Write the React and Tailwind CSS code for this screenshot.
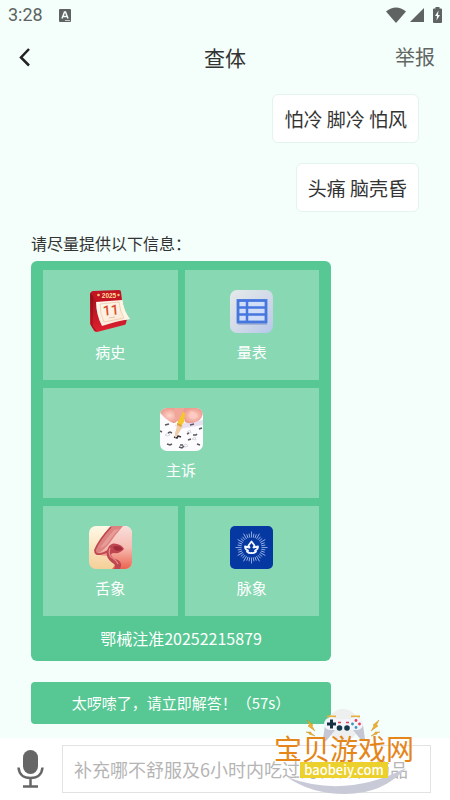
import React, { useState } from 'react';

const messages = ['怕冷 脚冷 怕风', '头痛 脑壳昏'];

function CalendarIcon() {
  return (
    <svg viewBox="0 0 43 43" className="size-[43px]" aria-hidden="true">
      <defs>
        <linearGradient id="cal-red" x1="0" y1="0" x2="0" y2="1">
          <stop offset="0" stopColor="#9c0f1b" />
          <stop offset="1" stopColor="#e0202f" />
        </linearGradient>
        <linearGradient id="cal-page" x1="0" y1="0" x2="1" y2="1">
          <stop offset="0" stopColor="#fffaf0" />
          <stop offset="1" stopColor="#f8e6d2" />
        </linearGradient>
      </defs>
      <path d="M1 4q0-2 2-2l4 7 31 20-1 4q0 2-2 2L8 42q-3 0-4-3L1 34z" fill="url(#cal-red)" />
      <path d="M3 5v31l4 5" fill="none" stroke="#7c0c15" strokeWidth=".8" />
      <path d="M7 11 33 9q2 13 8 20-13 2-28 7Q7 25 7 11z" fill="url(#cal-page)" />
      <path d="M33 9q2 13 8 20l-7 1q-1-9-4-15z" fill="#fff5e5" />
      <path d="M11 14 30 12q1 10 5 16L15 32q-4-8-4-18z" fill="none" stroke="#ecc3a2" strokeWidth=".7" />
      <path d="M2 3Q2 1 4 1l26-1q2 0 2 2l1 8L7 12z" fill="#c31423" />
      <text x="20" y="8" textAnchor="middle" fontFamily="Liberation Sans, sans-serif" fontSize="6.500" fontWeight="700" fill="#ffdf9b">2025</text>
      <circle cx="9.500" cy="5" r="1.300" fill="#f6c878" />
      <circle cx="29.500" cy="5" r="1.200" fill="#f6c878" />
      <text x="22" y="25" textAnchor="middle" fontFamily="Roboto, sans-serif" fontSize="14" fontWeight="500" fill="#d9502d" transform="rotate(-5 22 22)">11</text>
      <path d="m20 28 6-1" stroke="#deb294" strokeWidth=".7" />
    </svg>
  );
}

function TableIcon() {
  return (
    <svg viewBox="0 0 43 43" className="size-[43px]" aria-hidden="true">
      <defs>
        <linearGradient id="table-bg" x1="0" y1="0" x2="1" y2="1">
          <stop offset="0" stopColor="#e5e9e9" />
          <stop offset=".5" stopColor="#d3dbe8" />
          <stop offset="1" stopColor="#b6c7eb" />
        </linearGradient>
      </defs>
      <rect width="43" height="43" rx="7" fill="url(#table-bg)" />
      <path d="M7 32h30v3H8z" fill="#8f9fc4" opacity=".6" />
      <rect x="8" y="10.500" width="28" height="21.500" fill="#d0def8" stroke="#4577df" strokeWidth="2.800" />
      <path d="M8 17.500h28M8 24.500h28M17 10v22" stroke="#4577df" strokeWidth="2.500" />
    </svg>
  );
}

function ComplaintIcon() {
  return (
    <svg viewBox="0 0 43 43" className="size-[43px]" aria-hidden="true">
      <defs>
        <clipPath id="complaint-clip"><rect width="43" height="43" rx="7" /></clipPath>
        <radialGradient id="skin">
          <stop offset="0" stopColor="#ffd5cb" />
          <stop offset="1" stopColor="#ec9c8f" />
        </radialGradient>
      </defs>
      <g clipPath="url(#complaint-clip)">
        <path d="M0 0h43v43H0z" fill="#fcfbfe" />
        <path d="M14 17 43 12v5l-24 4z" fill="#eadff0" />
        <g fill="none" stroke="#d8d7de" strokeWidth="1">
          <path d="m5 27 3-2 2 2-3 1zm17 11 4-2 2 2-3 1zm10-7 3-2 1 3zm-5-7 3-2 1 3z" />
        </g>
        <g fill="none" stroke="#5b5860" strokeWidth="1.500">
          <path d="m5 17 4-1m21 1 4-1m5 5 3-1M0 23l2 1m6 1 2-1 2 1m-5 11 3 1 2-1m15-10 2-1m-1 7 3-1M19 39l3 1 2-2m-4-1 3 0m14-1 3 1M33 27l3 0 1-1" />
        </g>
        <path d="m14 29 3 1 1-2 3 1" fill="none" stroke="#39343b" strokeWidth="1.600" />
        <path d="M0 0h15l4 8q-2 8-6 7Q4 11 0 4z" fill="url(#skin)" />
        <path d="M14 0h11l-1 9q-2 5-6 5-4-4-4-14z" fill="#f0a79a" />
        <path d="M24 0h19q1 9-5 13-8 4-13 1-3-8-1-14z" fill="url(#skin)" />
        <path d="M31 3q6 1 7 6-4 3-8 1-2-4 1-7z" fill="#ffc9c3" opacity=".8" />
        <path d="m18 15 5 3-6 10-2 2 0-5z" fill="#f0cda6" />
        <path d="m20 10 3-6 2 1-1 9-3 4-4-2z" fill="#f6c62a" />
        <path d="m17 15 5 2-1 2-4-2z" fill="#dba33a" />
      </g>
    </svg>
  );
}

function TongueIcon() {
  return (
    <svg viewBox="0 0 43 43" className="size-[43px]" aria-hidden="true">
      <defs>
        <linearGradient id="tongue-bg" x1="0" y1="0" x2="0" y2="1">
          <stop offset="0" stopColor="#fff8e6" />
          <stop offset="1" stopColor="#f5cf98" />
        </linearGradient>
        <linearGradient id="tongue-skin" x1="0" y1="0" x2="0" y2="1">
          <stop offset="0" stopColor="#f9dedb" />
          <stop offset=".5" stopColor="#f6bdb2" />
          <stop offset="1" stopColor="#ec6350" />
        </linearGradient>
        <clipPath id="tongue-clip"><rect width="43" height="43" rx="7" /></clipPath>
      </defs>
      <g clipPath="url(#tongue-clip)">
        <path d="M0 0h43v43H0z" fill="url(#tongue-bg)" />
        <path d="M22 0h21v43H23q3-3 3-5-6-3-7-8Q8 30 6 25 10 14 22 0z" fill="url(#tongue-skin)" />
        <path d="M22 0h12Q26 9 20 18 14 25 9 27q-4 0-3-3Q11 12 22 0z" fill="#dd8280" />
        <path d="M22 1Q10 14 6 24q0 5 5 4 6-1 9-4" fill="none" stroke="#bd4a50" strokeWidth="1.800" />
        <path d="M25 4Q14 17 11 22q5-1 8-5 6-9 11-14z" fill="#e89c97" />
        <path d="M19 22q3-6 9-4 5 1 7 5-4 5-10 4-3 0-3 2 2 4 7 5 5 3 2 9h-6q2-3 0-5-6-4-7-8-1-3 1-8z" fill="#bf4650" />
        <path d="M24 21q6-3 10 2-4 3-8 1z" fill="#a02b3b" />
        <path d="M21 22q-2 6 1 9 6 4 7 7" fill="none" stroke="#e38b88" strokeWidth="1.300" />
      </g>
    </svg>
  );
}

const rays = Array.from({ length: 36 }, (_, i) => i * 10);

function PulseIcon() {
  return (
    <svg viewBox="0 0 43 43" className="size-[43px]" aria-hidden="true">
      <rect width="43" height="43" rx="5" fill="#0638a2" />
      {rays.map((deg) => (
        <path
          key={deg}
          d={deg % 30 === 0 ? 'M21.500 5.500v6' : 'M21.500 7.500v4'}
          stroke="#a9c0ea"
          strokeWidth=".8"
          transform={`rotate(${deg} 21.500 21.500)`}
        />
      ))}
      <path
        d="M18.500 19.500 21.500 15.500l3 4-1 2 4.500-1q0 3-3 4l1 1q-2 2-4.500 1.500-2.500.5-4.500-1.500l1-1q-3-1-3-4l4.500 1z"
        fill="none"
        stroke="#f4f8ff"
        strokeWidth="1.800"
        strokeLinejoin="round"
      />
    </svg>
  );
}

const items = [
  { label: '病史', Icon: CalendarIcon, span: '' },
  { label: '量表', Icon: TableIcon, span: '' },
  { label: '主诉', Icon: ComplaintIcon, span: 'col-span-2' },
  { label: '舌象', Icon: TongueIcon, span: '' },
  { label: '脉象', Icon: PulseIcon, span: '' },
];

function StatusBar() {
  return (
    <div className="flex h-[30px] items-center justify-between px-2 text-[#5f6462]">
      <div className="flex items-center gap-4">
        <span className="font-['Roboto',sans-serif] text-[18px] leading-5">3:28</span>
        <svg viewBox="0 0 12 13" className="h-[13px] w-3" aria-hidden="true">
          <rect width="12" height="13" rx="1" fill="currentColor" />
          <path d="M3 9.500 5.500 3h1L9 9.500M4 7.500h4" fill="none" stroke="#f4fffb" strokeWidth="1.500" />
          <path d="M6 11.500h5" stroke="#c5ccc9" />
        </svg>
      </div>
      <div className="flex items-center gap-1">
        <svg viewBox="0 0 20 16" className="h-4 w-5" aria-hidden="true">
          <path d="M0 4.500Q10-3.500 20 4.500L10 16z" fill="currentColor" />
        </svg>
        <svg viewBox="0 0 14 14" className="h-[14px] w-[14px]" aria-hidden="true">
          <path d="M14 0v14H0z" fill="currentColor" />
        </svg>
        <svg viewBox="0 0 9 16" className="ml-[5px] h-4 w-[9px]" aria-hidden="true">
          <path d="M2.500 0h4v1.500H8q1 0 1 1V15q0 1-1 1H1q-1 0-1-1V2.500q0-1 1-1h1.500z" fill="currentColor" />
          <path d="M5.500 3.500 2 9h2l-.5 4.500L7 8H5z" fill="#f4fffb" />
        </svg>
      </div>
    </div>
  );
}

function Bolts() {
  return (
    <g fill="#efb12b" stroke="#c8871b" strokeWidth=".4">
      <path d="m2 1 6 5-1 1 3 5-7-5 1.500-1z" />
      <path d="m1 13 5 0 0 1 4 3-6-2 0-1z" />
    </g>
  );
}

// Site badge drawn on top of the input bar
function SiteBadge() {
  return (
    <div className="pointer-events-none absolute right-[35px] bottom-[3px] flex w-[142px] flex-col items-center pb-[19px]">
      <svg viewBox="0 0 142 30" className="absolute bottom-0 w-[142px]" aria-hidden="true">
        <path d="M14 10Q72 32 133 1 110 27 72 27 38 27 14 10z" fill="#c8cad7" />
      </svg>
      <svg viewBox="0 0 78 34" className="relative h-[34px] w-[78px]" aria-hidden="true">
        <circle cx="38" cy="16" r="16" fill="#eeefef" />
        <g transform="translate(0 10)"><Bolts /></g>
        <g transform="translate(76 10) scale(-1 1)"><Bolts /></g>
        <path d="M22 7.500h9M46 7.500h9" stroke="#e5b13c" strokeWidth="2" />
        <path d="M26 8q5 0 7 2h11q2-2 7-2 6 1 7 8l2 14q-1 4-4 1l-8-10H30l-8 10q-3 3-4-1l2-14q0-7 6-8z" fill="#c5c7d5" />
        <path d="M26 8q5 0 7 2h11q2-2 7-2 7 1 7 8-1 5-7 5H26q-6 0-7-5 0-7 7-8z" fill="#f4f5fa" />
        <path d="M26.500 10.500v9M22 15h9" stroke="#173144" strokeWidth="3" />
        <path d="M33 13.500h3M41 13.500h3" stroke="#e34058" strokeWidth="1.500" />
        <g fill="#18384b"><circle cx="34.500" cy="19" r="2.800" /><circle cx="42" cy="19" r="2.800" /></g>
        <circle cx="51" cy="11.500" r="1.400" fill="#e53e59" />
        <circle cx="51" cy="18.500" r="1.400" fill="#3995bc" />
        <circle cx="47.500" cy="15" r="1.400" fill="#3995bc" />
        <circle cx="54.500" cy="15" r="1.400" fill="#e53e59" />
      </svg>
      <p className="relative -mt-[8px] text-[28px] leading-[27px] whitespace-nowrap text-[#e5861a]">宝贝游戏网</p>
      <p className="relative bg-[#ecd02c] px-1 text-[13px] leading-[16px] font-medium text-white">baobeiy.com</p>
    </div>
  );
}

function App() {
  const [text, setText] = useState('');

  return (
    <div className="flex min-h-screen flex-col bg-[#f4fffb] font-['Noto_Sans_CJK_SC',sans-serif] text-[#333]">
      <StatusBar />

      <header className="grid h-[54px] grid-cols-3 items-center px-[15px]">
        <button type="button" aria-label="返回" className="justify-self-start">
          <svg viewBox="0 0 16 20" className="h-5 w-4" aria-hidden="true">
            <path d="M14 2 6 10.500l8 8" fill="none" stroke="#222" strokeWidth="2.500" />
          </svg>
        </button>
        <h1 className="text-center text-[21px] leading-7">查体</h1>
        <button type="button" className="justify-self-end text-[20px] leading-7 text-[#626664]">举报</button>
      </header>

      <main className="flex flex-1 flex-col px-[31px] pt-[10px] pb-[14px]">
        <div className="flex flex-col items-end gap-5">
          {messages.map((message) => (
            <p key={message} className="rounded-md border border-[#e4f3ed] bg-white px-[11px] py-[10px] text-[19px] leading-[27px]">
              {message}
            </p>
          ))}
        </div>

        <p className="mt-[19px] text-[16px] leading-6">请尽量提供以下信息：</p>

        <section className="mt-[6px] w-full max-w-[300px] rounded-md bg-[#57c793] px-[12px] pt-[9px] text-white">
          <div className="grid grid-cols-2 gap-x-[7px] gap-y-2">
            {items.map(({ label, Icon, span }) => (
              <button
                key={label}
                type="button"
                className={`flex h-[110px] flex-col items-center gap-2 bg-[#88d8b4] pt-5 text-[15px] leading-[22px] ${span}`}
              >
                <Icon />
                {label}
              </button>
            ))}
          </div>
          <p className="text-center text-[16px] leading-[45px]">鄂械注准20252215879</p>
        </section>

        <button type="button" className="mt-[21px] h-[42px] w-full max-w-[300px] rounded bg-[#57c793] text-[15px] text-white">
          太啰嗦了，请立即解答！（57s）
        </button>
      </main>

      <footer className="relative flex items-center gap-[18px] bg-white py-[7px] pr-[19px] pl-[17px]">
        <button type="button" aria-label="语音输入">
          <svg viewBox="0 0 27 38" className="h-[38px] w-[27px]" aria-hidden="true">
            <rect x="6" y="0" width="15" height="24" rx="7.500" fill="#666" />
            <path d="M1.500 17.500q1 10.500 12 10.500t12-10.500M13.500 28v8M6 36.500h15" fill="none" stroke="#666" strokeWidth="2.500" />
          </svg>
        </button>
        <input
          type="text"
          aria-label="补充症状"
          value={text}
          onChange={(e) => setText(e.target.value)}
          placeholder="补充哪不舒服及6小时内吃过的食物和药品"
          className="h-12 min-w-0 flex-1 border border-[#e2e2e2] bg-white px-[11px] text-[18px] outline-none placeholder:text-[#b5b5b5]"
        />
        <SiteBadge />
      </footer>
    </div>
  );
}

export default App;
